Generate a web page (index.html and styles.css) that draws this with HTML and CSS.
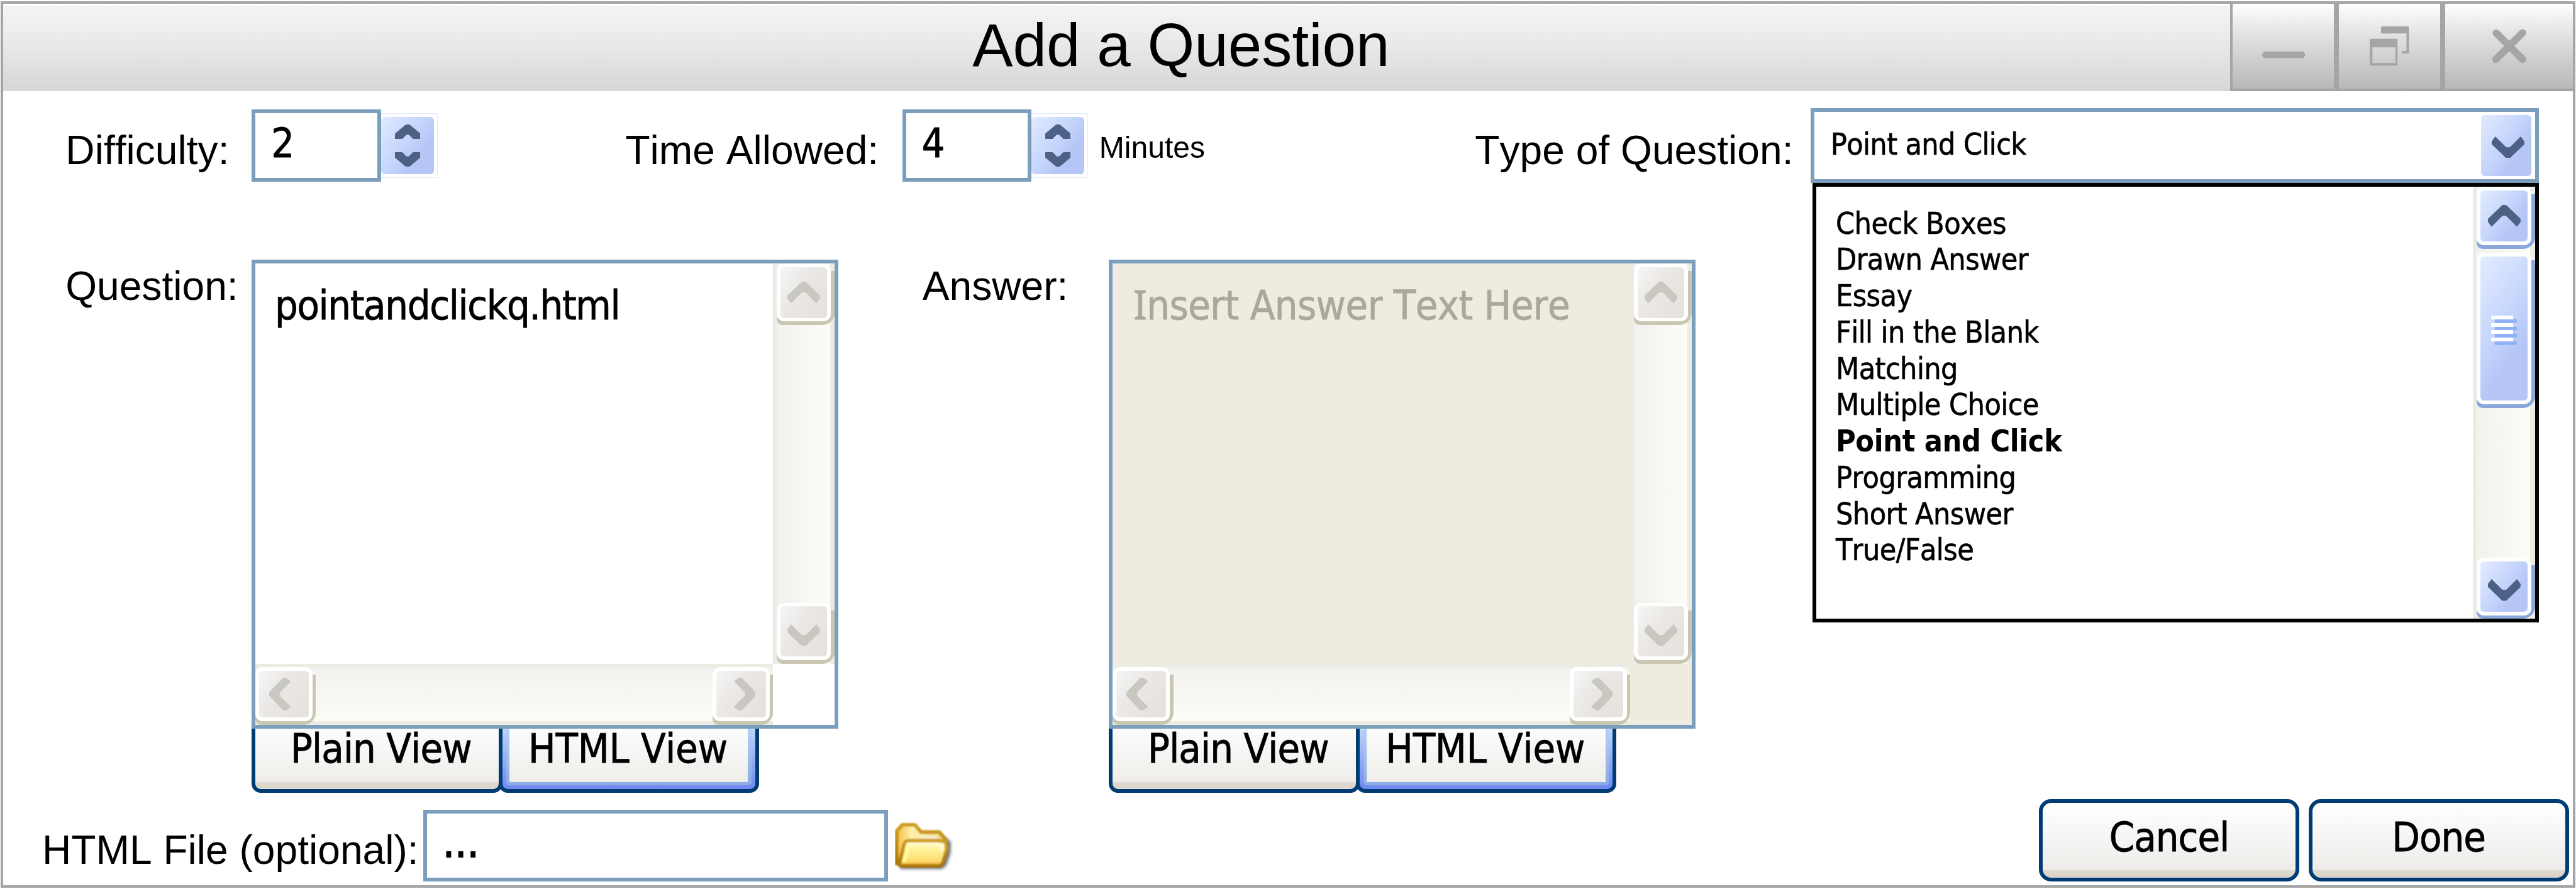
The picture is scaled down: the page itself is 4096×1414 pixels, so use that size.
FILE: index.html
```html
<!DOCTYPE html>
<html lang="en">
<head>
<meta charset="utf-8">
<title>Add a Question</title>
<link rel="stylesheet" href="styles.css">
</head>
<body>
<svg class="defs" aria-hidden="true">
  <symbol id="up" viewBox="0 0 54 36"><path d="M24 0h6l24 23v5l-6 8-18-18h-6L6 36l-6-8v-5z"/></symbol>
  <symbol id="down" viewBox="0 0 54 36"><path d="M24 36h6l24-23V8l-6-8-18 18h-6L6 0 0 8v5z"/></symbol>
  <symbol id="left" viewBox="0 0 36 54"><path d="M0 24v6l23 24h5l8-6-18-18v-6L36 6l-8-6h-5z"/></symbol>
  <symbol id="right" viewBox="0 0 36 54"><path d="M36 24v6L13 54H8l-8-6 18-18v-6L0 6l8-6h5z"/></symbol>
  <symbol id="spin-up" viewBox="0 0 42 24"><path d="M18 0h6l18 15v9H30l-7-7h-4l-7 7H0v-9z"/></symbol>
  <symbol id="spin-down" viewBox="0 0 42 24"><path d="M18 24h6L42 9V0H30l-7 7h-4l-7-7H0v9z"/></symbol>
</svg>
<div class="window">
  <header class="titlebar">
    <h1 class="title">Add a Question</h1>
    <div class="controls">
      <div class="control"><svg viewBox="3689 6 168 140"><rect x="3738" y="85" width="71" height="11" rx="5.5"/></svg></div>
      <div class="control"><svg viewBox="3865 6 168 140"><path fill-rule="evenodd" d="M3935 45q0-1.500 1.500-1.500h43q1.500 0 1.500 1.500v41.500q0 2-2 2h-8q-2.500 0-2.500-2.300t2.500-2.200h6V55h-41q-1.500 0-1.500-1.500zM3916 66q0-2 2-2h42q2 0 2 2v40.500q0 2-2 2h-42q-2 0-2-2zM3920.500 78v26h38V78z"/></svg></div>
      <div class="control"><svg viewBox="4041 6 211 140"><path class="cross" d="M4125.500 54.500l43.500 43.500M4169 54l-44 44"/></svg></div>
    </div>
  </header>

  <section class="fields">
    <label class="label">Difficulty:</label>
    <div class="stepper">
      <div class="stepper-value">2</div>
      <div class="spinner"><div class="spinner-face"><svg><use href="#spin-up"/></svg><svg><use href="#spin-down"/></svg></div></div>
    </div>
    <label class="label time-label">Time Allowed:</label>
    <div class="stepper">
      <div class="stepper-value">4</div>
      <div class="spinner"><div class="spinner-face"><svg><use href="#spin-up"/></svg><svg><use href="#spin-down"/></svg></div></div>
      <span class="unit">Minutes</span>
    </div>
    <label class="label type-label">Type of Question:</label>
    <div class="select">
      <div class="select-box">
        <span class="select-text">Point and Click</span>
        <div class="select-button"><svg class="chevron"><use href="#down"/></svg></div>
      </div>
      <div class="menu">
        <ul class="options">
          <li>Check Boxes</li>
          <li>Drawn Answer</li>
          <li>Essay</li>
          <li>Fill in the Blank</li>
          <li>Matching</li>
          <li>Multiple Choice</li>
          <li class="selected">Point and Click</li>
          <li>Programming</li>
          <li>Short Answer</li>
          <li>True/False</li>
        </ul>
        <div class="track vertical active">
          <div class="key"><div class="key-rim"><div class="key-face"><svg class="chevron"><use href="#up"/></svg></div></div></div>
          <div class="key thumb"><div class="key-rim"><div class="key-face">
            <div class="grip"><i></i><i></i><i></i><i></i></div>
          </div></div></div>
          <div class="key last"><div class="key-rim"><div class="key-face"><svg class="chevron"><use href="#down"/></svg></div></div></div>
        </div>
      </div>
    </div>
  </section>

  <section class="editors">
    <label class="label">Question:</label>
    <div class="editor-group">
      <div class="editor">
        <div class="editor-text question-text">pointandclickq.html</div>
        <div class="track vertical">
          <div class="key"><div class="key-rim"><div class="key-face"><svg class="chevron"><use href="#up"/></svg></div></div></div>
          <div class="key last"><div class="key-rim"><div class="key-face"><svg class="chevron"><use href="#down"/></svg></div></div></div>
        </div>
        <div class="track horizontal">
          <div class="key"><div class="key-rim"><div class="key-face"><svg class="chevron side"><use href="#left"/></svg></div></div></div>
          <div class="key"><div class="key-rim"><div class="key-face"><svg class="chevron side"><use href="#right"/></svg></div></div></div>
        </div>
      </div>
      <div class="tabs">
        <div class="tab"><div class="tab-face">Plain View</div></div>
        <div class="tab current"><div class="ring"><div class="tab-face">HTML View</div></div></div>
      </div>
    </div>
    <label class="label answer-label">Answer:</label>
    <div class="editor-group">
      <div class="editor disabled">
        <div class="editor-text answer-text"><span class="serif-cap">I</span>nsert Answer Text Here</div>
        <div class="track vertical">
          <div class="key"><div class="key-rim"><div class="key-face"><svg class="chevron"><use href="#up"/></svg></div></div></div>
          <div class="key last"><div class="key-rim"><div class="key-face"><svg class="chevron"><use href="#down"/></svg></div></div></div>
        </div>
        <div class="track horizontal">
          <div class="key"><div class="key-rim"><div class="key-face"><svg class="chevron side"><use href="#left"/></svg></div></div></div>
          <div class="key"><div class="key-rim"><div class="key-face"><svg class="chevron side"><use href="#right"/></svg></div></div></div>
        </div>
      </div>
      <div class="tabs">
        <div class="tab"><div class="tab-face">Plain View</div></div>
        <div class="tab current"><div class="ring"><div class="tab-face">HTML View</div></div></div>
      </div>
    </div>
  </section>

  <footer class="footer">
    <label class="label file-label">HTML File (optional):</label>
    <div class="file-box">...</div>
    <svg class="folder" viewBox="0 0 96 90">
      <defs>
        <linearGradient id="fback" x1="0" y1="0" x2="1" y2="0"><stop offset="0" stop-color="#f3bd45"/><stop offset=".3" stop-color="#fff2ac"/><stop offset="1" stop-color="#ecd27c"/></linearGradient>
        <linearGradient id="ffront" x1="0" y1="0" x2="0" y2="1"><stop offset="0" stop-color="#fffce6"/><stop offset=".35" stop-color="#fff298"/><stop offset=".8" stop-color="#ffdc70"/><stop offset="1" stop-color="#e5a92c"/></linearGradient>
        <linearGradient id="fline" x1="0" y1="0" x2="0" y2="1"><stop offset="0" stop-color="#cf9f22"/><stop offset="1" stop-color="#ad7608"/></linearGradient>
        <filter id="shade" x="-20%" y="-20%" width="140%" height="140%"><feGaussianBlur stdDeviation="3"/></filter>
        <filter id="soft" x="-5%" y="-5%" width="110%" height="110%"><feGaussianBlur stdDeviation="1.2"/></filter>
      </defs>
      <path d="M8 77h70l7-6 7-21V32l-10-8-4 40-67 4z" fill="#3d4662" opacity=".8" filter="url(#shade)"/>
      <g filter="url(#soft)" stroke-linejoin="round">
        <path d="M3 68V14l5-5 4-5h21l10 12h30l4 4 7 9 1 15-9 24z" fill="url(#fback)" stroke="url(#fline)" stroke-width="6"/>
        <path d="M40 22h30v5H40z" fill="#f7efcc"/>
        <path d="M7 70l8-34q2-6 8-6h49l12 2 2 12-7 24-5 4H10z" fill="url(#ffront)" stroke="url(#fline)" stroke-width="6"/>
        <path d="M75 35l6 1v9l-6 4z" fill="#fffbd8"/>
        <path d="M15 64l8-24" stroke="#ffff9c" stroke-width="5" stroke-linecap="round"/>
      </g>
    </svg>
    <div class="actions">
      <button class="button cancel">Cancel</button>
      <button class="button done">Done</button>
    </div>
  </footer>
</div>
</body>
</html>
```
FILE: styles.css
```css
/* 1rem is ten design units; the dialog is 425.7 x 147 rem */
html { font-size: 9.6218px; }
* { box-sizing: border-box; }
body {
  margin: 0;
  background: #fff;
  color: #000;
  overflow: hidden;
  font-family: "Liberation Sans", Arial, sans-serif;
  font-kerning: none;
  font-variant-ligatures: none;
}
.defs { position: absolute; width: 0; height: 0; }

.window {
  width: 425.5rem;
  height: 146.6rem;
  margin: 0.2rem 0.1rem;
  border: 4px solid #a5a5a5;
  background: #fff;
}

/* title bar */
.titlebar {
  display: flex;
  justify-content: space-between;
  height: 14.5rem;
  padding-left: 160.2rem;
  background: linear-gradient(#fff 0.25rem, #f4f4f4 0.3rem, #e8e8e8 50%, #d6d6d6);
}
.title {
  margin: 0;
  font-size: 10rem;
  font-weight: 400;
  line-height: 13.8rem;
  white-space: nowrap;
}
.controls {
  display: grid;
  grid-template-columns: 17.6rem 17.6rem 21.5rem;
  height: 14.4rem;
}
.control {
  border: solid #a5a5a5;
  border-width: 0 4px 4px;
  background: linear-gradient(#fefefe, #dcdcdc 45%, #b8b8b8);
}
.control:last-child { border-right-width: 0; }
.control svg { display: block; width: 100%; height: 100%; fill: #a5a5a5; }
.cross { stroke: #a5a5a5; stroke-width: 12; stroke-linecap: round; }

/* labels */
.label {
  font-size: 6.667rem;
  line-height: 8rem;
  white-space: nowrap;
}

/* first row */
.fields {
  display: grid;
  grid-template-columns: 30.75rem 61.76rem 45.74rem 94.66rem 55.5rem 120.3rem;
  align-items: start;
  height: 12.44rem;
  margin-top: 2.73rem;
  padding-left: 10.33rem;
}
.fields .label { padding-top: 3.03rem; }
.stepper {
  display: flex;
  align-items: flex-start;
  padding-top: 0.27rem;
}
.stepper-value,
.select-box,
.editor,
.file-box {
  border: 6px solid #7b9ebd;
  background: #fff;
}
.stepper-value,
.select-text,
.options,
.editor-text,
.tabs,
.file-box,
.button {
  font-family: "DejaVu Sans Condensed", "DejaVu Sans", Tahoma, sans-serif;
  font-kerning: none;
  -webkit-text-stroke: 0.012em;
}
.stepper-value {
  width: 21.35rem;
  height: 11.87rem;
  padding-left: 2.6rem;
  font-size: 6.7rem;
  line-height: 9.9rem;
}
.spinner {
  width: 9.35rem;
  height: 10.7rem;
  margin-top: 0.6rem;
  padding: 0.55rem 0.5rem 0.55rem 0;
  border: solid #e4eafa;
  border-width: 1px 1px 1px 0;
}
.spinner-face {
  display: flex;
  flex-direction: column;
  justify-content: space-between;
  align-items: center;
  height: 100%;
  padding: 1.2rem 0;
  border-radius: 0.6rem;
  background: linear-gradient(125deg, #e1eaff, #c3d3fb 50%, #b4c5f6 72%);
  fill: #4d6185;
}
.spinner-face svg { width: 4.2rem; height: 2.4rem; }
.unit {
  margin-left: 1.85rem;
  font-size: 5rem;
  line-height: 12.5rem;
}

/* question type */
.select { position: relative; }
.select-box {
  display: flex;
  justify-content: space-between;
  height: 12.44rem;
  padding-left: 2.65rem;
}
.select-text {
  font-size: 5rem;
  line-height: 10.7rem;
  letter-spacing: -0.014em;
}
.select-button {
  display: flex;
  align-items: center;
  justify-content: center;
  width: 8.3rem;
  margin: 0.6rem;
  border-radius: 0.6rem;
  background: linear-gradient(125deg, #e1eaff, #c3d3fb 50%, #b4c5f6 72%);
  fill: #4d6185;
}
.select-button .chevron { margin-left: 0.5rem; margin-top: 0.5rem; }
.chevron { display: block; width: 5.4rem; height: 3.6rem; }
.chevron.side { width: 3.6rem; height: 5.4rem; }
.menu {
  position: absolute;
  top: 12.44rem;
  left: 0.25rem;
  right: 0;
  display: flex;
  justify-content: space-between;
  height: 72.65rem;
  border: 6px solid #000;
  background: #fff;
}
.options {
  margin: 0;
  padding: 3.05rem 0 0 3.25rem;
  list-style: none;
  font-size: 5rem;
  line-height: 6rem;
  letter-spacing: -0.013em;
}
.selected { font-weight: 700; letter-spacing: -0.007em; -webkit-text-stroke: 0; }

/* scroll bars */
.track {
  --shade: #c9c7b2;
  --face: linear-gradient(125deg, #f6f6f6, #eae7e4 45%, #e5e2dd);
  --arrow: #c8c8c1;
  display: flex;
}
.track.active {
  --shade: #8aa7da;
  --face: linear-gradient(125deg, #e3ecff, #c3d3fb 50%, #b4c5f6 72%);
  --arrow: #4d6185;
}
.vertical {
  flex-direction: column;
  width: 10.1rem;
  padding-left: 0.6rem;
  background: linear-gradient(90deg, #ecece4 0.6rem, #f2f1ed 0.6rem, #fdfdf8 9.4rem, #ecece4 9.5rem);
}
.vertical.active { width: 10.25rem; }
.horizontal {
  justify-content: space-between;
  padding-top: 0.6rem;
  background: linear-gradient(#ecece4 0.6rem, #f2f1ed 0.6rem, #fdfdf8 9.4rem, #ecece4 9.5rem);
}
.key {
  height: 10.2rem;
  padding: 0 0.6rem 0.6rem 0;
  border-radius: 0 0 2rem 1rem;
  background: linear-gradient(var(--shade), var(--shade)) 0 1.25rem no-repeat;
}
.horizontal .key { width: 10rem; height: 100%; }
.key.last { height: 10.1rem; margin-top: auto; }
.key-rim {
  height: 100%;
  padding: 0.6rem;
  border-radius: 1.2rem;
  background: #fff;
}
.key-face {
  display: flex;
  align-items: center;
  justify-content: center;
  height: 100%;
  border-radius: 0.6rem;
  background: var(--face);
  fill: var(--arrow);
}
.last .chevron { margin-top: 1.2rem; }
.horizontal .key:first-child .chevron { margin-right: 1.2rem; }
.horizontal .key:last-child .chevron { margin-left: 1.2rem; }
.thumb { height: 25.6rem; margin-top: 0.7rem; }
.grip { display: grid; gap: 0.6rem; margin: 0 0.6rem 0 0; }
.grip i {
  width: 3.6rem;
  height: 0.6rem;
  background: #fff;
  box-shadow: 0.6rem 0.6rem #8eb1f9;
}

/* question and answer editors */
.editors {
  display: grid;
  grid-template-columns: 30.77rem 110.85rem 30.82rem 97rem;
  align-items: start;
  margin-top: 12.63rem;
  padding-left: 10.31rem;
}
.editors .label { padding-top: 0.39rem; }
.editor-group { width: 96.9rem; }
.editor {
  display: grid;
  grid-template-columns: 1fr 10.1rem;
  grid-template-rows: 1fr 10.1rem;
  height: 77.53rem;
}
.editor-text {
  padding: 3rem 0 0 3.2rem;
  font-size: 6.7rem;
  line-height: 8rem;
  white-space: nowrap;
}
.question-text { letter-spacing: -0.021em; }
.answer-text { padding-left: 3.4rem; letter-spacing: -0.0085em; }
.disabled { background: #efebde; color: #aca899; }
.serif-cap { font-family: "Noto Sans", sans-serif; line-height: 1; }
.tabs {
  display: flex;
  height: 10.6rem;
  font-size: 6.7rem;
  line-height: 6.7rem;
  white-space: nowrap;
}
.tab {
  width: 41.4rem;
  border: solid #003c74;
  border-width: 0 6px 6px;
  border-radius: 0 0 1.5rem 1.5rem;
  background: linear-gradient(#e0dcd4, #d8d2c6) 0 100% / 100% 1.2rem no-repeat;
}
.tab-face {
  height: 8.8rem;
  padding-left: 5.8rem;
  background: linear-gradient(#fcfcfb, #eeedea);
  letter-spacing: -0.014em;
}
.tab.current {
  width: 43.05rem;
  margin-left: -0.6rem;
  padding: 0 0.6rem 0.6rem;
  background: linear-gradient(#bdd5f8, #6f87f0);
}
.ring {
  height: 100%;
  padding: 0 0.6rem 0.6rem;
  border-radius: 0 0 0.5rem 0.5rem;
  background: linear-gradient(#b4cff8, #8aabe4);
}
.current .tab-face { padding-left: 3.1rem; letter-spacing: -0.003em; }

/* bottom row */
.footer {
  display: flex;
  align-items: flex-start;
  margin-top: 1.05rem;
  padding: 0 0.65rem 0 6.45rem;
}
.file-label { width: 63rem; padding-top: 4.52rem; }
.file-box {
  width: 76.77rem;
  height: 11.8rem;
  margin-top: 1.8rem;
  padding-left: 2.6rem;
  font-size: 6.7rem;
  line-height: 9.7rem;
  letter-spacing: 0.015em;
  -webkit-text-stroke: 0.03em;
}
.folder { width: 9.6rem; height: 9rem; margin: 3.9rem 0 0 1.15rem; }
.actions { display: flex; gap: 1.5rem; margin-left: auto; }
.button {
  width: 43.05rem;
  height: 13.57rem;
  padding: 0 0 0.7rem;
  border: 6px solid #003c74;
  border-radius: 2rem;
  background: linear-gradient(#dfdbd0, #d8d2c6) 0 100% / 100% 1.2rem no-repeat, linear-gradient(#fff, #edece9 90%);
  color: #000;
  font-size: 6.7rem;
  line-height: 8rem;
  letter-spacing: -0.015em;
}
```
